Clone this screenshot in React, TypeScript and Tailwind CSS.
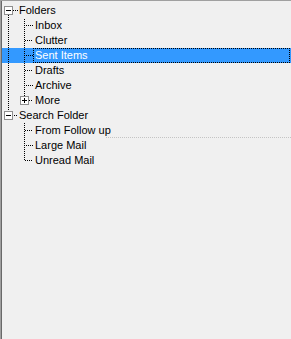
import React from "react";

type Row = {
  label: string;
  level: 0 | 1;
  box?: "minus" | "plus";
  rootLine: "none" | "full" | "top" | "bottom";
  childLine?: "full" | "top";
  selected?: boolean;
};

const rows: Row[] = [
  { label: "Folders", level: 0, box: "minus", rootLine: "bottom" },
  { label: "Inbox", level: 1, rootLine: "full", childLine: "full" },
  { label: "Clutter", level: 1, rootLine: "full", childLine: "full" },
  { label: "Sent Items", level: 1, rootLine: "full", childLine: "full", selected: true },
  { label: "Drafts", level: 1, rootLine: "full", childLine: "full" },
  { label: "Archive", level: 1, rootLine: "full", childLine: "full" },
  { label: "More", level: 1, box: "plus", rootLine: "full", childLine: "top" },
  { label: "Search Folder", level: 0, box: "minus", rootLine: "top" },
  { label: "From Follow up", level: 1, rootLine: "none", childLine: "full" },
  { label: "Large Mail", level: 1, rootLine: "none", childLine: "full" },
  { label: "Unread Mail", level: 1, rootLine: "none", childLine: "top" },
];

const ROW_H = 15;
const TOP = 2;
const LEFT = 2;

function Dots({
  x0,
  y0,
  x1,
  y1,
  rowTop,
  color,
}: {
  x0: number;
  y0: number;
  x1: number;
  y1: number;
  rowTop: number;
  color: string;
}) {
  const out: React.ReactElement[] = [];
  if (x0 === x1) {
    for (let y = y0; y <= y1; y++) {
      if ((rowTop + y + LEFT + x0) % 2 === 0)
        out.push(<rect key={`v${y}`} x={x0} y={y} width={1} height={1} fill={color} />);
    }
  } else {
    for (let x = x0; x <= x1; x++) {
      if ((rowTop + y0 + LEFT + x) % 2 === 0)
        out.push(<rect key={`h${x}`} x={x} y={y0} width={1} height={1} fill={color} />);
    }
  }
  return <>{out}</>;
}

function Box({ cx, type }: { cx: number; type: "minus" | "plus" }) {
  const x = cx - 4;
  const y = 3;
  return (
    <g shapeRendering="crispEdges">
      <rect x={x + 0.5} y={y + 0.5} width={8} height={8} fill="#ffffff" stroke="#8f8f8f" strokeWidth={1} />
      <rect x={x + 2} y={y + 4} width={5} height={1} fill="#000" />
      {type === "plus" && <rect x={x + 4} y={y + 2} width={1} height={5} fill="#000" />}
    </g>
  );
}

function Gutter({ row, index }: { row: Row; index: number }) {
  const rowTop = TOP + index * ROW_H;
  const width = row.level === 0 ? 16 : 31;
  const lineColor = "#000";
  const rootX = 6;
  const childX = 22;
  const cy = 7;
  return (
    <svg width={width} height={ROW_H} className="block shrink-0" shapeRendering="crispEdges">
      {row.rootLine === "full" && <Dots x0={rootX} y0={0} x1={rootX} y1={ROW_H - 1} rowTop={rowTop} color={lineColor} />}
      {row.rootLine === "top" && <Dots x0={rootX} y0={0} x1={rootX} y1={2} rowTop={rowTop} color={lineColor} />}
      {row.rootLine === "bottom" && <Dots x0={rootX} y0={12} x1={rootX} y1={ROW_H - 1} rowTop={rowTop} color={lineColor} />}
      {row.level === 0 && <Dots x0={11} y0={cy} x1={15} y1={cy} rowTop={rowTop} color={lineColor} />}
      {row.level === 1 && row.childLine === "full" && !row.box && (
        <Dots x0={childX} y0={0} x1={childX} y1={ROW_H - 1} rowTop={rowTop} color={lineColor} />
      )}
      {row.level === 1 && row.childLine === "top" && !row.box && (
        <Dots x0={childX} y0={0} x1={childX} y1={cy} rowTop={rowTop} color={lineColor} />
      )}
      {row.level === 1 && row.box && <Dots x0={childX} y0={0} x1={childX} y1={2} rowTop={rowTop} color={lineColor} />}
      {row.level === 1 && (
        <Dots x0={row.box ? 27 : childX + 1} y0={cy} x1={30} y1={cy} rowTop={rowTop} color={lineColor} />
      )}
      {row.box && <Box cx={row.level === 0 ? rootX : childX} type={row.box} />}
    </svg>
  );
}

export default function App() {
  return (
    <div
      className="w-[291px] h-[339px] bg-[#a0a0a0] pt-[1px] pl-[1px] overflow-hidden"
      style={{ fontFamily: '"Liberation Sans", Arial, sans-serif' }}
    >
      <div className="w-full h-full bg-[#696969] pl-[1px]">
        <div className="relative w-full h-full bg-[#f0f0f0] pt-[2px] flex flex-col">
          {rows.map((row, i) => (
            <div
              key={row.label}
              className={`flex h-[15px] items-stretch ${row.selected ? "bg-[#3399ff]" : ""}`}
            >
              <Gutter row={row} index={i} />
              {row.selected ? (
                <div className="h-[15px] flex-1 mr-[1px] border border-dotted border-black pl-[1px] text-[11px] leading-[13px] whitespace-nowrap text-white">
                  {row.label}
                </div>
              ) : (
                <div
                  className={`h-[15px] pt-[1px] text-[11px] leading-[13px] whitespace-nowrap text-black ${
                    row.level === 0 ? "pl-[1px]" : "pl-[2px]"
                  }`}
                >
                  {row.label}
                </div>
              )}
            </div>
          ))}
          <div className="absolute left-[104px] right-0 top-[136px] border-t border-dotted border-[#c4c4c4]" />
        </div>
      </div>
    </div>
  );
}
